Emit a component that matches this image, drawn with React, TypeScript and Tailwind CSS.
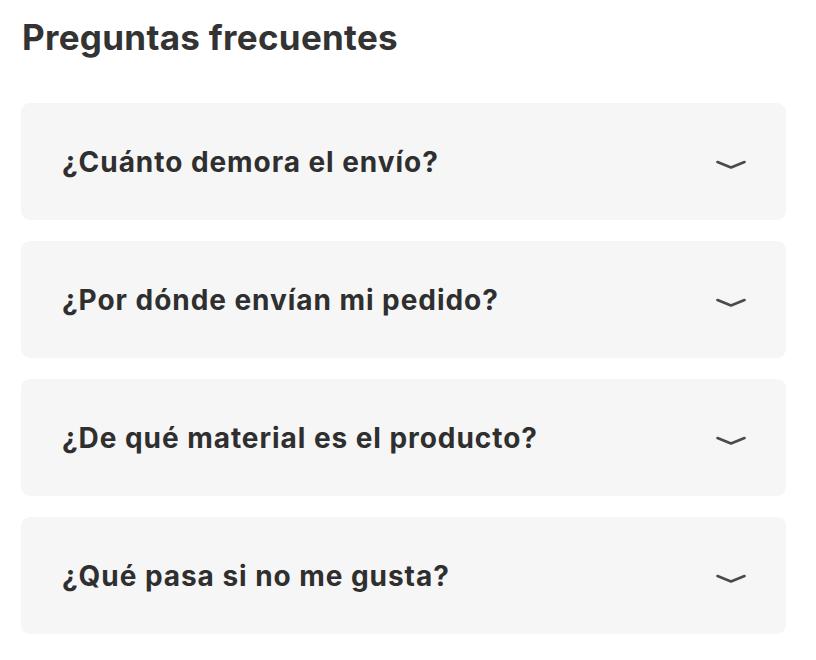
import React from "react";

const items = [
  "¿Cuánto demora el envío?",
  "¿Por dónde envían mi pedido?",
  "¿De qué material es el producto?",
  "¿Qué pasa si no me gusta?",
];

function Chevron() {
  return (
    <svg width="30" height="10" viewBox="0 0 30 10" fill="none" className="mt-[7px]">
      <path d="M1.5 2 L15 7.5 L28.5 2" stroke="#4a4a4a" strokeWidth="2.6" strokeLinecap="round" strokeLinejoin="round" />
    </svg>
  );
}

export default function App() {
  return (
    <div className="w-[816px] h-[660px] bg-white px-[21px] pt-[14px]" style={{ fontFamily: "Inter, 'Liberation Sans', sans-serif" }}>
      <h2 className="text-[35px] leading-[46px] font-bold text-[#333333] tracking-[0.3px] pl-[1px]">Preguntas frecuentes</h2>
      <div className="mt-[43px] flex flex-col gap-[21px] w-[765px]">
        {items.map((q) => (
          <div key={q} className="h-[117px] rounded-[9px] bg-[#f6f6f6] flex items-center justify-between pl-[41px] pr-[40px]">
            <span className="text-[28px] font-bold text-[#2f2f2f] tracking-[0.95px]">{q}</span>
            <Chevron />
          </div>
        ))}
      </div>
    </div>
  );
}
